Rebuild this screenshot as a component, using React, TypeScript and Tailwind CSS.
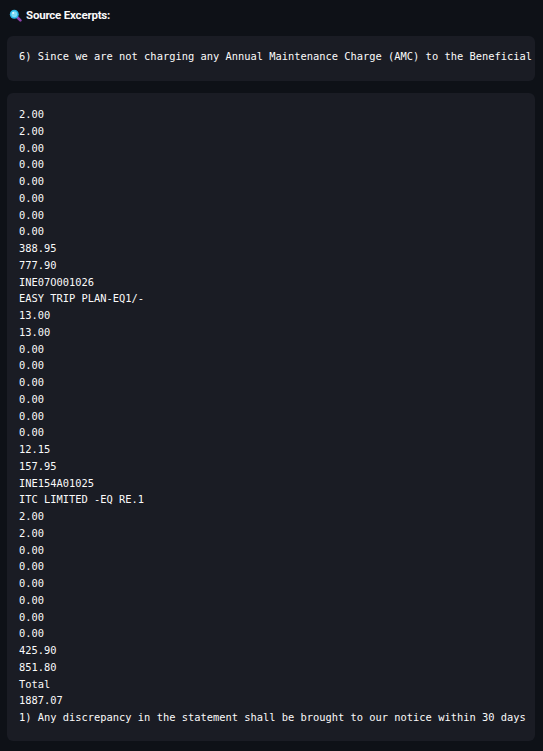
const lines = [
  "2.00", "2.00", "0.00", "0.00", "0.00", "0.00", "0.00", "0.00", "388.95", "777.90",
  "INE07O001026", "EASY TRIP PLAN-EQ1/-", "13.00", "13.00", "0.00", "0.00", "0.00", "0.00", "0.00", "0.00",
  "12.15", "157.95", "INE154A01025", "ITC LIMITED -EQ RE.1", "2.00", "2.00", "0.00", "0.00", "0.00", "0.00",
  "0.00", "0.00", "425.90", "851.80", "Total", "1887.07",
  "1) Any discrepancy in the statement shall be brought to our notice within 30 days",
];

function SearchEmoji() {
  return (
    <svg width="13" height="13" viewBox="0 0 16 16">
      <line x1="9.5" y1="9.5" x2="14" y2="14" stroke="#8e44ad" strokeWidth="3.2" strokeLinecap="round" />
      <circle cx="6.5" cy="6.5" r="5.5" fill="#2ab7e6" />
      <circle cx="6.5" cy="6.5" r="3.6" fill="#7fdcf5" />
      <circle cx="5.2" cy="5" r="1.3" fill="#e8fbff" />
    </svg>
  );
}

export default function App() {
  return (
    <div className="min-h-screen w-[543px] bg-[#0e1117] text-[#fafafa] overflow-hidden">
      {/* Header */}
      <div className="flex items-center gap-[4px] pl-[9px] pt-[3px] h-[28px]">
        <SearchEmoji />
        <span className="font-['Roboto',sans-serif] font-bold text-[11.5px] tracking-[-0.2px]">Source Excerpts:</span>
      </div>

      <div className="pl-[7px] pr-[8px] pt-[8px] flex flex-col gap-[12px]">
        {/* First excerpt */}
        <div className="bg-[#1a1c24] rounded-[6px] h-[45px] pl-[12px] pt-[12px] overflow-hidden">
          <pre className="font-['DejaVu_Sans_Mono',monospace] text-[10.4px] leading-[16.8px] whitespace-pre">
            6) Since we are not charging any Annual Maintenance Charge (AMC) to the Beneficial
          </pre>
        </div>

        {/* Second excerpt */}
        <div className="bg-[#1a1c24] rounded-[6px] pl-[12px] pt-[13px] pb-[15px] overflow-hidden">
          <pre className="font-['DejaVu_Sans_Mono',monospace] text-[10.4px] leading-[16.75px] whitespace-pre">
            {lines.join("\n")}
          </pre>
        </div>
      </div>
    </div>
  );
}
